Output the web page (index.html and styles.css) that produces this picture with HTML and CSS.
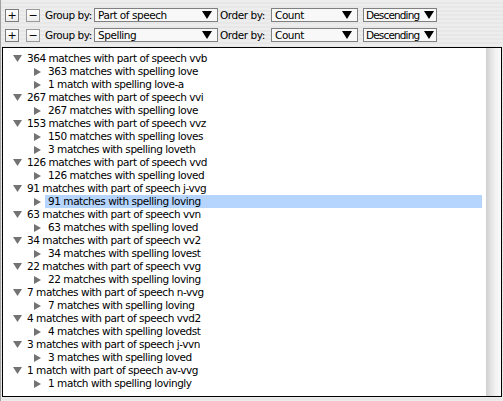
FILE: index.html
```html
<!DOCTYPE html>
<html>
<head>
<meta charset="utf-8">
<link rel="stylesheet" href="styles.css">
</head>
<body>
<div class="window">
  <div class="toolbar">
    <div class="crit">
      <span class="btn btn-add">+</span>
      <span class="btn btn-del">−</span>
      <span class="lbl lbl-group">Group by:</span>
      <span class="sel sel-group"><span class="sel-text">Part of speech</span><svg class="arrow" width="10" height="8" viewBox="0 0 10 8"><path d="M0 0H10L5 8Z"/></svg></span>
      <span class="lbl lbl-order">Order by:</span>
      <span class="sel sel-order"><span class="sel-text">Count</span><svg class="arrow" width="10" height="8" viewBox="0 0 10 8"><path d="M0 0H10L5 8Z"/></svg></span>
      <span class="sel sel-dir"><span class="sel-text">Descending</span><svg class="arrow" width="10" height="8" viewBox="0 0 10 8"><path d="M0 0H10L5 8Z"/></svg></span>
    </div>
    <div class="crit">
      <span class="btn btn-add">+</span>
      <span class="btn btn-del">−</span>
      <span class="lbl lbl-group">Group by:</span>
      <span class="sel sel-group"><span class="sel-text">Spelling</span><svg class="arrow" width="10" height="8" viewBox="0 0 10 8"><path d="M0 0H10L5 8Z"/></svg></span>
      <span class="lbl lbl-order">Order by:</span>
      <span class="sel sel-order"><span class="sel-text">Count</span><svg class="arrow" width="10" height="8" viewBox="0 0 10 8"><path d="M0 0H10L5 8Z"/></svg></span>
      <span class="sel sel-dir"><span class="sel-text">Descending</span><svg class="arrow" width="10" height="8" viewBox="0 0 10 8"><path d="M0 0H10L5 8Z"/></svg></span>
    </div>
  </div>
  <div class="tree">
    <div class="list">
      <div class="row l0"><span class="tri"><svg width="9" height="7" viewBox="0 0 9 7"><path d="M0 0H9L4.5 7Z"/></svg></span><span class="label">364 matches with part of speech vvb</span></div>
      <div class="row l1"><span class="tri"><svg width="7" height="8" viewBox="0 0 7 8"><path d="M0 0L7 4L0 8Z"/></svg></span><span class="label">363 matches with spelling love</span></div>
      <div class="row l1"><span class="tri"><svg width="7" height="8" viewBox="0 0 7 8"><path d="M0 0L7 4L0 8Z"/></svg></span><span class="label">1 match with spelling love-a</span></div>
      <div class="row l0"><span class="tri"><svg width="9" height="7" viewBox="0 0 9 7"><path d="M0 0H9L4.5 7Z"/></svg></span><span class="label">267 matches with part of speech vvi</span></div>
      <div class="row l1"><span class="tri"><svg width="7" height="8" viewBox="0 0 7 8"><path d="M0 0L7 4L0 8Z"/></svg></span><span class="label">267 matches with spelling love</span></div>
      <div class="row l0"><span class="tri"><svg width="9" height="7" viewBox="0 0 9 7"><path d="M0 0H9L4.5 7Z"/></svg></span><span class="label">153 matches with part of speech vvz</span></div>
      <div class="row l1"><span class="tri"><svg width="7" height="8" viewBox="0 0 7 8"><path d="M0 0L7 4L0 8Z"/></svg></span><span class="label">150 matches with spelling loves</span></div>
      <div class="row l1"><span class="tri"><svg width="7" height="8" viewBox="0 0 7 8"><path d="M0 0L7 4L0 8Z"/></svg></span><span class="label">3 matches with spelling loveth</span></div>
      <div class="row l0"><span class="tri"><svg width="9" height="7" viewBox="0 0 9 7"><path d="M0 0H9L4.5 7Z"/></svg></span><span class="label">126 matches with part of speech vvd</span></div>
      <div class="row l1"><span class="tri"><svg width="7" height="8" viewBox="0 0 7 8"><path d="M0 0L7 4L0 8Z"/></svg></span><span class="label">126 matches with spelling loved</span></div>
      <div class="row l0"><span class="tri"><svg width="9" height="7" viewBox="0 0 9 7"><path d="M0 0H9L4.5 7Z"/></svg></span><span class="label">91 matches with part of speech j-vvg</span></div>
      <div class="row l1 selected"><span class="tri"><svg width="7" height="8" viewBox="0 0 7 8"><path d="M0 0L7 4L0 8Z"/></svg></span><span class="label">91 matches with spelling loving</span></div>
      <div class="row l0"><span class="tri"><svg width="9" height="7" viewBox="0 0 9 7"><path d="M0 0H9L4.5 7Z"/></svg></span><span class="label">63 matches with part of speech vvn</span></div>
      <div class="row l1"><span class="tri"><svg width="7" height="8" viewBox="0 0 7 8"><path d="M0 0L7 4L0 8Z"/></svg></span><span class="label">63 matches with spelling loved</span></div>
      <div class="row l0"><span class="tri"><svg width="9" height="7" viewBox="0 0 9 7"><path d="M0 0H9L4.5 7Z"/></svg></span><span class="label">34 matches with part of speech vv2</span></div>
      <div class="row l1"><span class="tri"><svg width="7" height="8" viewBox="0 0 7 8"><path d="M0 0L7 4L0 8Z"/></svg></span><span class="label">34 matches with spelling lovest</span></div>
      <div class="row l0"><span class="tri"><svg width="9" height="7" viewBox="0 0 9 7"><path d="M0 0H9L4.5 7Z"/></svg></span><span class="label">22 matches with part of speech vvg</span></div>
      <div class="row l1"><span class="tri"><svg width="7" height="8" viewBox="0 0 7 8"><path d="M0 0L7 4L0 8Z"/></svg></span><span class="label">22 matches with spelling loving</span></div>
      <div class="row l0"><span class="tri"><svg width="9" height="7" viewBox="0 0 9 7"><path d="M0 0H9L4.5 7Z"/></svg></span><span class="label">7 matches with part of speech n-vvg</span></div>
      <div class="row l1"><span class="tri"><svg width="7" height="8" viewBox="0 0 7 8"><path d="M0 0L7 4L0 8Z"/></svg></span><span class="label">7 matches with spelling loving</span></div>
      <div class="row l0"><span class="tri"><svg width="9" height="7" viewBox="0 0 9 7"><path d="M0 0H9L4.5 7Z"/></svg></span><span class="label">4 matches with part of speech vvd2</span></div>
      <div class="row l1"><span class="tri"><svg width="7" height="8" viewBox="0 0 7 8"><path d="M0 0L7 4L0 8Z"/></svg></span><span class="label">4 matches with spelling lovedst</span></div>
      <div class="row l0"><span class="tri"><svg width="9" height="7" viewBox="0 0 9 7"><path d="M0 0H9L4.5 7Z"/></svg></span><span class="label">3 matches with part of speech j-vvn</span></div>
      <div class="row l1"><span class="tri"><svg width="7" height="8" viewBox="0 0 7 8"><path d="M0 0L7 4L0 8Z"/></svg></span><span class="label">3 matches with spelling loved</span></div>
      <div class="row l0"><span class="tri"><svg width="9" height="7" viewBox="0 0 9 7"><path d="M0 0H9L4.5 7Z"/></svg></span><span class="label">1 match with part of speech av-vvg</span></div>
      <div class="row l1"><span class="tri"><svg width="7" height="8" viewBox="0 0 7 8"><path d="M0 0L7 4L0 8Z"/></svg></span><span class="label">1 match with spelling lovingly</span></div>
    </div>
    <div class="scroll"></div>
  </div>
</div>
</body>
</html>
```

FILE: styles.css
```css
html, body {
  margin: 0;
  padding: 0;
}
body {
  width: 503px;
  height: 401px;
  overflow: hidden;
  background: repeating-linear-gradient(to bottom, #ededed 0 2px, #e7e7e7 2px 4px);
  font-family: "DejaVu Sans", sans-serif;
  font-size: 10.5px;
  letter-spacing: -0.45px;
  color: #000;
}
.window {
  height: 401px;
  box-sizing: border-box;
  border-left: 1px solid #a0a0a0;
  padding-top: 8px;
}
.toolbar {
  display: flex;
  flex-direction: column;
  gap: 6px;
  padding-left: 4px;
}
.crit {
  display: flex;
  align-items: center;
  height: 14px;
}
.btn {
  box-sizing: border-box;
  width: 14px;
  height: 13px;
  border: 1px solid #7c7c7c;
  background: linear-gradient(#ffffff, #ececec);
  display: flex;
  align-items: center;
  justify-content: center;
  font-size: 11px;
  line-height: 11px;
  letter-spacing: 0;
}
.btn-add {
  margin-right: 7px;
}
.btn-del {
  margin-right: 5px;
  border-color: #9a9a9a;
}
.lbl {
  white-space: nowrap;
  line-height: 14px;
}
.lbl-group {
  width: 49px;
}
.lbl-order {
  width: 51px;
  margin-left: 2px;
}
.sel {
  box-sizing: border-box;
  height: 14px;
  border: 1px solid #808080;
  background: #f8f8f8;
  display: flex;
  align-items: center;
  padding-left: 3px;
  white-space: nowrap;
}
.sel-text {
  flex: 1;
  line-height: 12px;
}
.sel .arrow {
  fill: #000;
  flex: none;
}
.sel-group {
  width: 124px;
  padding-right: 5px;
}
.sel-order {
  width: 87px;
  padding-right: 5px;
}
.sel-dir {
  width: 74px;
  margin-left: 5px;
  padding-left: 2px;
  padding-right: 2px;
  letter-spacing: -0.85px;
}
.tree {
  box-sizing: border-box;
  height: 350px;
  margin: 5px 1px 0 1px;
  border: 1px solid #000;
  background: #fff;
  display: flex;
}
.list {
  flex: 1;
  padding-top: 4px;
}
.scroll {
  width: 15px;
  background: linear-gradient(to right, #cfcfcf 0%, #e2e2e2 30%, #f1f1f1 60%, #fafafa 100%);
}
.row {
  display: flex;
  align-items: center;
  height: 13px;
  line-height: 13px;
  white-space: nowrap;
}
.tri {
  width: 9px;
  display: flex;
  align-items: center;
  fill: #737373;
}
.l0 {
  padding-left: 10px;
}
.l1 {
  padding-left: 31px;
}
.label {
  flex: 1;
  margin-left: 2px;
  margin-right: 4px;
  padding: 0 3px;
  height: 13px;
}
.selected .label {
  background: #b5d5ff;
}
```
